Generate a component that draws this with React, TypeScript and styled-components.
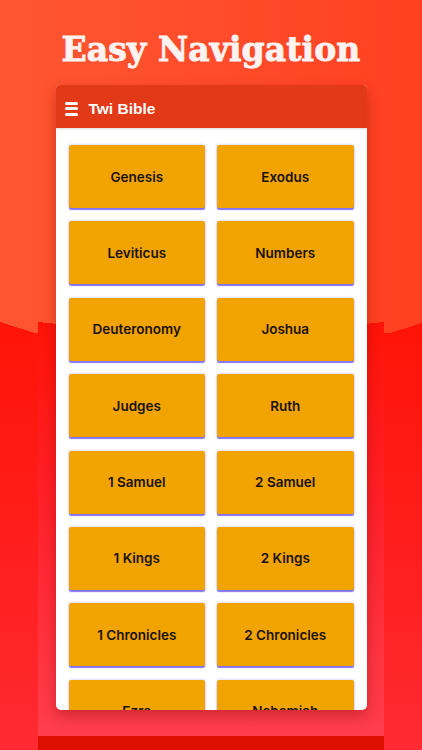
import React from "react";
import styled, { createGlobalStyle } from "styled-components";

const Global = createGlobalStyle`
  html, body { margin: 0; padding: 0; }
  body { width: 422px; height: 750px; overflow: hidden; }
`;

const LOW_TOP = "#ff1408";

const Page = styled.div`
  width: 422px;
  height: 750px;
  overflow: hidden;
  display: flex;
  justify-content: center;
  background:
    linear-gradient(to bottom left, transparent 50%, ${LOW_TOP} 50%) left 0 top 322px / 38px 12px no-repeat,
    linear-gradient(to bottom right, transparent 50%, ${LOW_TOP} 50%) right 0 top 323px / 38px 12px no-repeat,
    linear-gradient(to bottom, ${LOW_TOP} 0%, #ff1c18 40%, #ff2a32 100%) left 0 top 333px / 100% 417px no-repeat,
    linear-gradient(to right, #ff5631 0%, #ff4a28 60%, #ff4021 100%);
`;

const Device = styled.div`
  width: 346px;
  height: 750px;
  display: flex;
  flex-direction: column;
  align-items: center;
  background:
    linear-gradient(to bottom left, transparent 50%, ${LOW_TOP} 50%) left 0 top 322px / 60px 6px no-repeat,
    linear-gradient(to bottom right, transparent 50%, ${LOW_TOP} 50%) right 0 top 322px / 60px 6px no-repeat,
    linear-gradient(to bottom, ${LOW_TOP} 0%, #ff2028 40%, #ff4050 100%) left 0 top 327px / 100% 423px no-repeat;
`;

const Title = styled.h1`
  margin: 0;
  height: 85px;
  display: flex;
  align-items: center;
  justify-content: center;
  padding-top: 14px;
  box-sizing: border-box;
  font-family: "DejaVu Serif", "Liberation Serif", serif;
  font-weight: 700;
  font-size: 33px;
  letter-spacing: 0.1px;
  color: #fff3f2;
  -webkit-text-stroke: 0.9px #fff3f2;
`;

const Panel = styled.section`
  width: 311px;
  height: 625px;
  display: flex;
  flex-direction: column;
  background: #ffffff;
  border-radius: 4px 4px 5px 5px;
  overflow: hidden;
  box-shadow: 0 6px 14px rgba(120, 0, 0, 0.35);
`;

const Header = styled.header`
  height: 43px;
  flex: 0 0 43px;
  display: flex;
  align-items: center;
  gap: 11px;
  padding: 4px 0 0 9px;
  box-sizing: border-box;
  background: #e23916;
  box-shadow: 0 1px 2px rgba(0, 0, 0, 0.15);
`;

const Burger = styled.span`
  width: 13px;
  height: 14px;
  display: flex;
  flex-direction: column;
  justify-content: space-between;
`;

const Bar = styled.span`
  height: 3px;
  border-radius: 1.5px;
  background: #ffffff;
`;

const AppName = styled.span`
  font-family: "Liberation Sans", Arial, sans-serif;
  font-weight: 700;
  font-size: 15.5px;
  color: #ffffff;
`;

const Grid = styled.div`
  flex: 1;
  overflow: hidden;
  display: grid;
  grid-template-columns: 1fr 1fr;
  grid-auto-rows: 63px;
  column-gap: 12px;
  row-gap: 13.4px;
  padding: 17px 13px 0 13px;
`;

const BookButton = styled.button`
  border: none;
  border-radius: 2px;
  background: #f1a300;
  color: #1a1208;
  font-family: Inter, Roboto, "Noto Sans", sans-serif;
  font-weight: 600;
  font-size: 13.5px;
  padding: 0;
  box-shadow: 0 2px 1px rgba(95, 75, 235, 0.75), 0 0 3px rgba(120, 100, 255, 0.45);
  cursor: pointer;
`;

const BottomBar = styled.div`
  margin-top: auto;
  width: 100%;
  height: 14px;
  background: #dc1000;
`;

const books = [
  "Genesis", "Exodus", "Leviticus", "Numbers", "Deuteronomy", "Joshua",
  "Judges", "Ruth", "1 Samuel", "2 Samuel", "1 Kings", "2 Kings",
  "1 Chronicles", "2 Chronicles", "Ezra", "Nehemiah",
];

export default function App() {
  return (
    <>
      <Global />
      <Page>
        <Device>
          <Title>Easy Navigation</Title>
          <Panel>
            <Header>
              <Burger>
                <Bar />
                <Bar />
                <Bar />
              </Burger>
              <AppName>Twi Bible</AppName>
            </Header>
            <Grid>
              {books.map((b) => (
                <BookButton key={b}>{b}</BookButton>
              ))}
            </Grid>
          </Panel>
          <BottomBar />
        </Device>
      </Page>
    </>
  );
}
